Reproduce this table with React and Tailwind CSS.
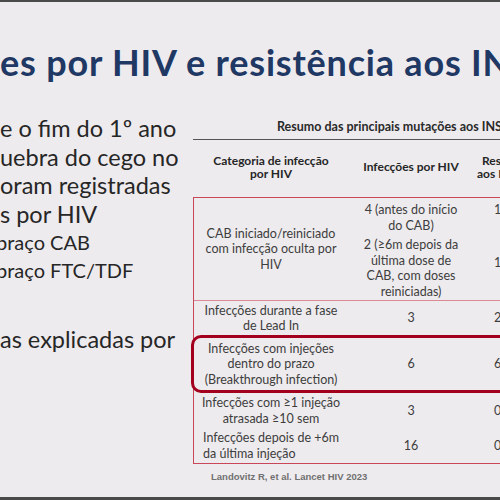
import React from 'react';

const lineCls = 'whitespace-nowrap';

const App = () => {
    return (
        <div className="w-[500px] h-[500px] overflow-hidden bg-[#eeebee] flex flex-col border-t-2 border-b-[3px] border-[#4a4a4a] font-['Lato',sans-serif]">
            {/* title */}
            <div className="h-[110px] shrink-0 pt-[40px]">
                <h1 className="text-[36px] leading-[40px] font-bold tracking-[0.8px] text-[#1f3864] whitespace-nowrap">
                    es por HIV e resistência aos INSTIs
                </h1>
            </div>

            <div className="flex flex-1 min-h-0">
                {/* left bullets */}
                <div className="w-[193px] shrink-0 pt-[2px] text-[#262626] overflow-hidden">
                    <div className="text-[23.5px] leading-[28.5px]">
                        <p className={lineCls}>e o fim do 1º ano</p>
                        <p className={lineCls}>uebra do cego no</p>
                        <p className={lineCls}>oram registradas</p>
                        <p className={lineCls}>s por HIV</p>
                    </div>
                    <div className="text-[20px] leading-[28px] -ml-[4px]">
                        <p className={lineCls}>braço CAB</p>
                        <p className={lineCls}>braço FTC/TDF</p>
                    </div>
                    <p className="mt-[41px] text-[23.5px] leading-[28.5px] whitespace-nowrap">as explicadas por</p>
                </div>

                {/* table */}
                <div className="w-[340px] shrink-0 pt-[7px] text-[12.5px] leading-[15.5px] text-[#3d3d3d]">
                    <p className="h-[16px] leading-[16px] mb-[4px] pl-[84px] text-[12.5px] font-bold text-[#2a2a2a] whitespace-nowrap">
                        Resumo das principais mutações aos INSTIs
                    </p>
                    <div className="h-px bg-[#555]" />

                    <div className="grid grid-cols-[154px_126px_60px] h-[57px] items-center pl-px pb-[3px] font-bold text-[#262626] text-[12px] leading-[13.5px]">
                        <div className="text-center">Categoria de infecção<br />por HIV</div>
                        <div className="text-center whitespace-nowrap">Infecções por HIV</div>
                        <div className="whitespace-nowrap">
                            <p className="pl-[8px]">Resistência</p>
                            <p className="pl-[3px]">aos INSTIs</p>
                        </div>
                    </div>

                    <div className="border-t border-b border-l border-[#c8485a]">
                        <div className="grid grid-cols-[154px_126px_60px] h-[103px] border-b border-[#d98a95]">
                            <div className="flex items-center justify-center text-center whitespace-nowrap">
                                <div>CAB iniciado/reiniciado<br />com infecção oculta por<br />HIV</div>
                            </div>
                            <div className="pt-[4px] text-center whitespace-nowrap">
                                <div className="h-[31px]">4 (antes do início<br />do CAB)</div>
                                <div className="mt-[4px]">2 (≥6m depois da<br />última dose de<br />CAB, com doses<br />reiniciadas)</div>
                            </div>
                            <div className="pt-[4px] pl-[20px]">
                                <div className="h-[31px]">1</div>
                                <div className="mt-[4px] pt-[18px]">1</div>
                            </div>
                        </div>

                        <div className="grid grid-cols-[154px_126px_60px] h-[34px] items-center">
                            <div className="text-center whitespace-nowrap">Infecções durante a fase<br />de Lead In</div>
                            <div className="text-center">3</div>
                            <div className="pl-[20px]">2</div>
                        </div>

                        <div className="grid grid-cols-[154px_126px_60px] h-[58px] items-center -ml-[3px] w-[calc(100%+3px)] border-[3px] border-[#a3001e] rounded-[10px]">
                            <div className="text-center whitespace-nowrap">Infecções com injeções<br />dentro do prazo<br />(Breakthrough infection)</div>
                            <div className="text-center">6</div>
                            <div className="pl-[20px]">6</div>
                        </div>

                        <div className="grid grid-cols-[154px_126px_60px] h-[35px] items-center">
                            <div className="text-center whitespace-nowrap">Infecções com ≥1 injeção<br />atrasada ≥10 sem</div>
                            <div className="text-center">3</div>
                            <div className="pl-[20px]">0</div>
                        </div>

                        <div className="grid grid-cols-[154px_126px_60px] h-[35px] items-center">
                            <div className="pl-[9px] whitespace-nowrap">Infecções depois de +6m<br />da última injeção</div>
                            <div className="text-center">16</div>
                            <div className="pl-[20px]">0</div>
                        </div>
                    </div>

                    <p className="mt-[6px] pl-[18px] text-[9.5px] leading-[14px] font-bold text-[#707070] font-['Liberation_Sans',sans-serif] whitespace-nowrap">
                        Landovitz R, et al. Lancet HIV 2023
                    </p>
                </div>
            </div>
        </div>
    );
};

export default App;
